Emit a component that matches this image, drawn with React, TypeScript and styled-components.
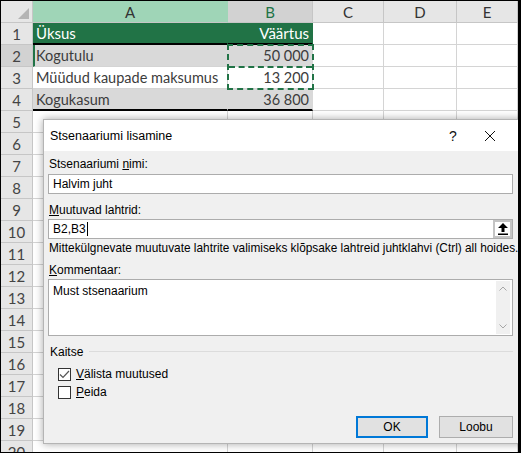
import React from 'react';
import styled, { createGlobalStyle } from 'styled-components';

const GlobalStyle = createGlobalStyle`
  html, body { margin: 0; padding: 0; background: #fff; }
  body { overflow: hidden; }
`;

const Frame = styled.div`
  position: relative;
  width: 521px;
  height: 453px;
  box-sizing: border-box;
  border: 1px solid #000;
  border-right-width: 3px;
  overflow: hidden;
  background: #fff;
`;

const Sheet = styled.div`
  display: grid;
  grid-template-columns: 32px 195px 85px 71px 73px 1fr;
  grid-template-rows: 22px repeat(20, 22px);
  font-family: Lato, "Liberation Sans", sans-serif;
`;

const Corner = styled.div`
  background: #e6e6e6;
  border-right: 1px solid #c6c6c6;
  border-bottom: 1px solid #c6c6c6;
  box-sizing: border-box;
  display: flex;
  align-items: flex-end;
  justify-content: flex-end;
  padding: 0 3px 3px 0;
`;

const ColHead = styled.div<{ $state?: 'sel' | 'hi' }>`
  box-sizing: border-box;
  background: ${(p) => (p.$state === 'sel' ? '#9fd5b7' : p.$state === 'hi' ? '#d2d2d2' : '#e6e6e6')};
  border-right: 1px solid ${(p) => (p.$state === 'sel' ? '#9fd5b7' : '#c6c6c6')};
  border-bottom: 1px solid #c6c6c6;
  color: ${(p) => (p.$state === 'hi' ? '#217346' : '#333')};
  font-size: 15px;
  display: flex;
  align-items: center;
  justify-content: center;
`;

const RowHead = styled.div<{ $hi?: boolean }>`
  box-sizing: border-box;
  background: ${(p) => (p.$hi ? '#d2d2d2' : '#e6e6e6')};
  border-right: 1px solid #c6c6c6;
  border-bottom: 1px solid #c6c6c6;
  color: #444;
  font-size: 15px;
  display: flex;
  align-items: center;
  justify-content: center;
`;

type Variant = 'head' | 'grey' | 'white' | 'plain';

const Cell = styled.div<{ $v: Variant; $right?: boolean; $thick?: boolean; $active?: boolean }>`
  position: relative;
  box-sizing: border-box;
  background: ${(p) => (p.$v === 'head' ? '#217346' : p.$v === 'grey' ? '#d9d9d9' : '#fff')};
  color: ${(p) => (p.$v === 'head' ? '#fff' : '#3c3c3c')};
  border-right: 1px solid ${(p) => (p.$v === 'head' ? '#217346' : p.$v === 'grey' ? '#d9d9d9' : '#d4d4d4')};
  border-bottom: ${(p) => (p.$thick ? '2px solid #000' : '1px solid #d4d4d4')};
  border-left: ${(p) => (p.$active ? '2px solid #217346' : 'none')};
  font-size: ${(p) => (p.$v === 'head' ? '15px' : '14.5px')};
  padding: ${(p) => (p.$active ? '0 3px 0 1px' : '0 3px')};
  display: flex;
  align-items: center;
  justify-content: ${(p) => (p.$right ? 'flex-end' : 'flex-start')};
  white-space: nowrap;
`;

const Ants = styled.div`
  position: absolute;
  z-index: 2;
  left: -1px;
  top: -1px;
  width: 87px;
  height: 46px;
  box-sizing: border-box;
  border: 2px dashed #217346;
  pointer-events: none;
  display: flex;
  flex-direction: column;
  justify-content: center;
`;

const AntsMid = styled.div`
  border-top: 2px dashed #217346;
`;

const Dialog = styled.div`
  position: absolute;
  left: 42px;
  top: 118px;
  width: 480px;
  height: 325px;
  box-sizing: border-box;
  background: #f0f0f0;
  border: 1px solid #b4b4b4;
  box-shadow: 0 0 8px rgba(0, 0, 0, 0.35);
  display: flex;
  flex-direction: column;
  font-family: "Liberation Sans", Arial, sans-serif;
  font-size: 12px;
  color: #000;
`;

const TitleBar = styled.div`
  height: 31px;
  flex: none;
  background: #fff;
  display: flex;
  align-items: center;
  padding-left: 6px;
  padding-right: 10px;
`;

const Title = styled.div`
  flex: 1;
  font-size: 12.5px;
`;

const TitleBtn = styled.div<{ $w: number }>`
  width: ${(p) => p.$w}px;
  display: flex;
  align-items: center;
  justify-content: center;
  font-size: 14px;
  color: #111;
`;

const Body = styled.div`
  flex: 1;
  display: flex;
  flex-direction: column;
  padding: 0 9px 0 4px;
`;

const Label = styled.div<{ $mt: number }>`
  margin-top: ${(p) => p.$mt}px;
  line-height: 16px;
  height: 16px;
  padding-left: 1px;
  white-space: nowrap;
`;

const TextBox = styled.div<{ $mt: number; $h: number }>`
  margin-top: ${(p) => p.$mt}px;
  height: ${(p) => p.$h}px;
  box-sizing: border-box;
  background: #fff;
  border: 1px solid #acacac;
  display: flex;
  align-items: center;
  padding-left: 4px;
  position: relative;
`;

const AreaBox = styled(TextBox)`
  align-items: flex-start;
  padding-top: 4px;
`;

const Caret = styled.span`
  display: inline-block;
  width: 1px;
  height: 14px;
  background: #000;
  margin-left: 1px;
  vertical-align: middle;
`;

const PickButton = styled.div`
  position: absolute;
  right: 0;
  top: 0;
  bottom: 0;
  width: 19px;
  box-sizing: border-box;
  border: 2px solid #c4c4c4;
  background: #fff;
  display: flex;
  align-items: center;
  justify-content: center;
`;

const ScrollBar = styled.div`
  position: absolute;
  right: 2px;
  top: 1px;
  bottom: 1px;
  width: 14px;
  background: #f0f0f0;
  display: flex;
  flex-direction: column;
  justify-content: space-between;
  align-items: center;
  padding: 5px 0;
  box-sizing: border-box;
`;

const Hint = styled.div`
  margin-top: 1px;
  line-height: 16px;
  padding-left: 1px;
  white-space: nowrap;
  font-size: 11.85px;
`;

const Group = styled.div`
  margin-top: 8px;
  display: flex;
  align-items: center;
  line-height: 16px;
  padding-left: 2px;
`;

const GroupLine = styled.div`
  flex: 1;
  height: 1px;
  background: #dcdcdc;
  margin-left: 6px;
  margin-top: -1px;
`;

const CheckRow = styled.div<{ $mt: number }>`
  margin-top: ${(p) => p.$mt}px;
  display: flex;
  align-items: center;
  padding-left: 10px;
  gap: 5px;
  line-height: 16px;
`;

const Box = styled.div`
  width: 13px;
  height: 13px;
  box-sizing: border-box;
  border: 1px solid #333;
  background: #fff;
  display: flex;
  align-items: center;
  justify-content: center;
`;

const Buttons = styled.div`
  margin-top: 16px;
  display: flex;
  justify-content: flex-end;
  gap: 11px;
`;

const Btn = styled.div<{ $primary?: boolean }>`
  width: ${(p) => (p.$primary ? 72 : 74)}px;
  height: 22px;
  box-sizing: border-box;
  background: #e1e1e1;
  border: ${(p) => (p.$primary ? '2px solid #0078d7' : '1px solid #adadad')};
  display: flex;
  align-items: center;
  justify-content: center;
`;

const cols = ['A', 'B', 'C', 'D', 'E'];

const data: Record<number, { a: string; b: string; v: Variant; thick?: boolean }> = {
  1: { a: 'Üksus', b: 'Väärtus', v: 'head', thick: true },
  2: { a: 'Kogutulu', b: '50 000', v: 'grey' },
  3: { a: 'Müüdud kaupade maksumus', b: '13 200', v: 'white' },
  4: { a: 'Kogukasum', b: '36 800', v: 'grey', thick: true },
};

export default function App() {
  const rows = Array.from({ length: 20 }, (_, i) => i + 1);
  return (
    <>
      <GlobalStyle />
      <Frame>
        <Sheet>
          <Corner>
            <svg width="11" height="11" viewBox="0 0 11 11">
              <polygon points="11,0 11,11 0,11" fill="#b4b4b4" />
            </svg>
          </Corner>
          {cols.map((c) => (
            <ColHead key={c} $state={c === 'A' ? 'sel' : c === 'B' ? 'hi' : undefined}>
              {c}
            </ColHead>
          ))}
          {rows.map((r) => {
            const d = data[r];
            return (
              <React.Fragment key={r}>
                <RowHead $hi={r === 2}>{r}</RowHead>
                <Cell $v={d ? d.v : 'plain'} $thick={d?.thick} $active={r === 2}>
                  {d?.a}
                </Cell>
                <Cell $v={d ? d.v : 'plain'} $thick={d?.thick} $right>
                  {d?.b}
                  {r === 2 && (
                    <Ants>
                      <AntsMid />
                    </Ants>
                  )}
                </Cell>
                <Cell $v="plain" />
                <Cell $v="plain" />
                <Cell $v="plain" />
              </React.Fragment>
            );
          })}
        </Sheet>

        <Dialog>
          <TitleBar>
            <Title>Stsenaariumi lisamine</Title>
            <TitleBtn $w={30}>?</TitleBtn>
            <TitleBtn $w={44}>
              <svg width="12" height="12" viewBox="0 0 12 12">
                <path d="M1 1 L11 11 M11 1 L1 11" stroke="#111" strokeWidth="1" />
              </svg>
            </TitleBtn>
          </TitleBar>
          <Body>
            <Label $mt={5}>
              Stsenaariumi <u>n</u>imi:
            </Label>
            <TextBox $mt={2} $h={20}>Halvim juht</TextBox>
            <Label $mt={8}>
              <u>M</u>uutuvad lahtrid:
            </Label>
            <TextBox $mt={1} $h={20}>
              B2,B3
              <Caret />
              <PickButton>
                <svg width="10" height="12" viewBox="0 0 10 12">
                  <polygon points="5,0 10,5 6.5,5 6.5,9 3.5,9 3.5,5 0,5" fill="#000" />
                  <rect x="0" y="10.5" width="10" height="1.5" fill="#000" />
                </svg>
              </PickButton>
            </TextBox>
            <Hint>Mittekülgnevate muutuvate lahtrite valimiseks klõpsake lahtreid juhtklahvi (Ctrl) all hoides.</Hint>
            <Label $mt={6}>
              <u>K</u>ommentaar:
            </Label>
            <AreaBox $mt={1} $h={57}>
              Must stsenaarium
              <ScrollBar>
                <svg width="8" height="5" viewBox="0 0 8 5">
                  <path d="M0.5 4.5 L4 1 L7.5 4.5" stroke="#a6a6a6" fill="none" />
                </svg>
                <svg width="8" height="5" viewBox="0 0 8 5">
                  <path d="M0.5 0.5 L4 4 L7.5 0.5" stroke="#a6a6a6" fill="none" />
                </svg>
              </ScrollBar>
            </AreaBox>
            <Group>
              Kaitse
              <GroupLine />
            </Group>
            <CheckRow $mt={6}>
              <Box>
                <svg width="11" height="9" viewBox="0 0 11 9">
                  <path d="M1 4.5 L4 7.5 L10 1" stroke="#555" strokeWidth="1.2" fill="none" />
                </svg>
              </Box>
              <span>
                <u>V</u>älista muutused
              </span>
            </CheckRow>
            <CheckRow $mt={2}>
              <Box />
              <span>
                <u>P</u>eida
              </span>
            </CheckRow>
            <Buttons>
              <Btn $primary>OK</Btn>
              <Btn>Loobu</Btn>
            </Buttons>
          </Body>
        </Dialog>
      </Frame>
    </>
  );
}
